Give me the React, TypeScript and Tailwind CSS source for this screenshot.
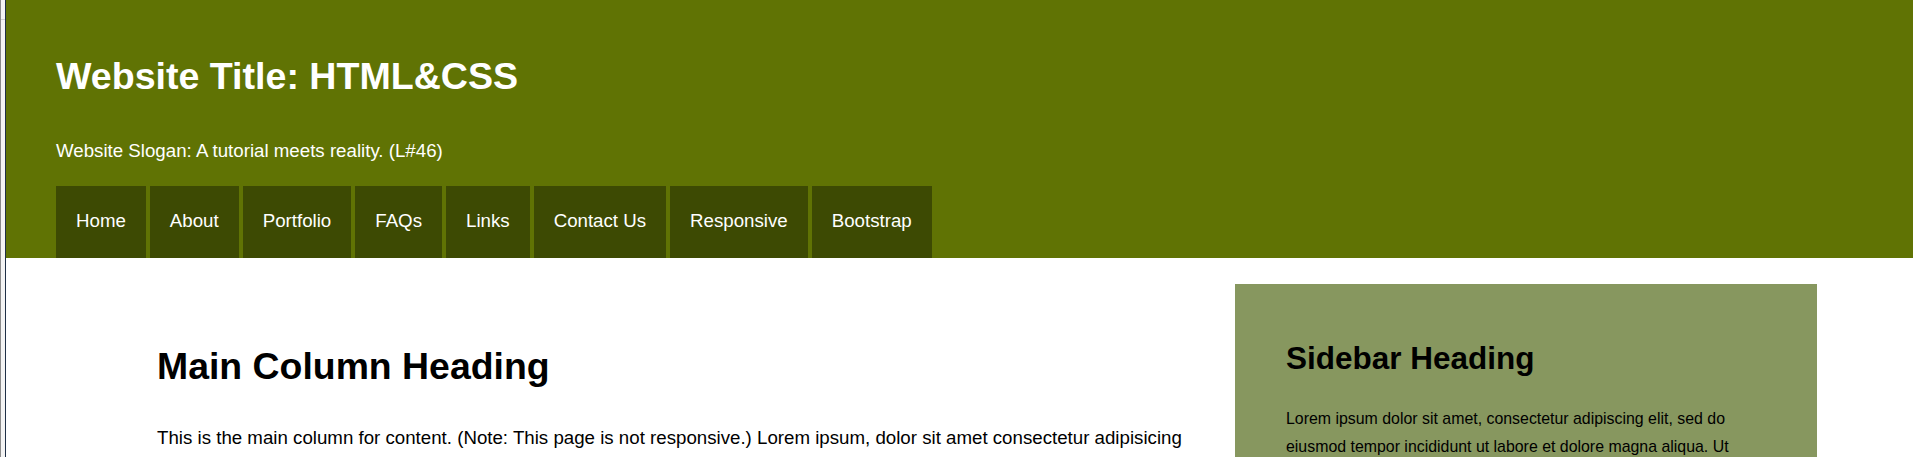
const navItems = ["Home", "About", "Portfolio", "FAQs", "Links", "Contact Us", "Responsive", "Bootstrap"];

const App = () => {
    return (
        <div className="flex min-h-screen bg-white font-['Liberation_Sans',Arial,sans-serif]">
            {/* window edge */}
            <div className="w-[6px] shrink-0 flex">
                <div className="w-px bg-[#8a8a8a]"></div>
                <div className="flex-1 bg-[#f4f4f4] border-r border-[#1f2f46]">
                    <div className="mt-[19px] h-px bg-[#d0d0d0]"></div>
                </div>
            </div>
            <div className="flex-1 flex flex-col">
                <header className="bg-[#607304] pl-[50px] pt-[55px]">
                    <h1 className="text-[37.6px] leading-[43px] font-bold text-white">Website Title: HTML&amp;CSS</h1>
                    <p className="mt-[42px] text-[18.7px] leading-[21.5px] text-white">Website Slogan: A tutorial meets reality. (L#46)</p>
                    <nav className="mt-[24px]">
                        <ul className="flex gap-1">
                            {navItems.map((item) => (
                                <li key={item} className="h-[72px] px-[20px] flex items-center bg-[#3d4a03] text-white text-[18.7px]">
                                    {item}
                                </li>
                            ))}
                        </ul>
                    </nav>
                </header>
                <div className="flex-1 flex">
                    <main className="w-[1194px] shrink-0 pl-[151px] pt-[87px]">
                        <h2 className="text-[37.4px] leading-[43px] font-bold text-black">Main Column Heading</h2>
                        <p className="mt-[34.5px] text-[18.7px] leading-[32.7px] text-black whitespace-nowrap">
                            This is the main column for content. (Note: This page is not responsive.) Lorem ipsum, dolor sit amet consectetur adipisicing
                        </p>
                    </main>
                    <aside className="ml-[35px] mt-[26px] w-[582px] shrink-0 bg-[#87975f] px-[51px] pt-[56px]">
                        <h3 className="text-[31.5px] leading-[36px] font-bold text-black">Sidebar Heading</h3>
                        <p className="mt-[29px] text-[15.9px] leading-[28px] text-black">
                            Lorem ipsum dolor sit amet, consectetur adipiscing elit, sed do
                            <br />
                            eiusmod tempor incididunt ut labore et dolore magna aliqua. Ut
                        </p>
                    </aside>
                </div>
            </div>
        </div>
    );
};

export default App;
